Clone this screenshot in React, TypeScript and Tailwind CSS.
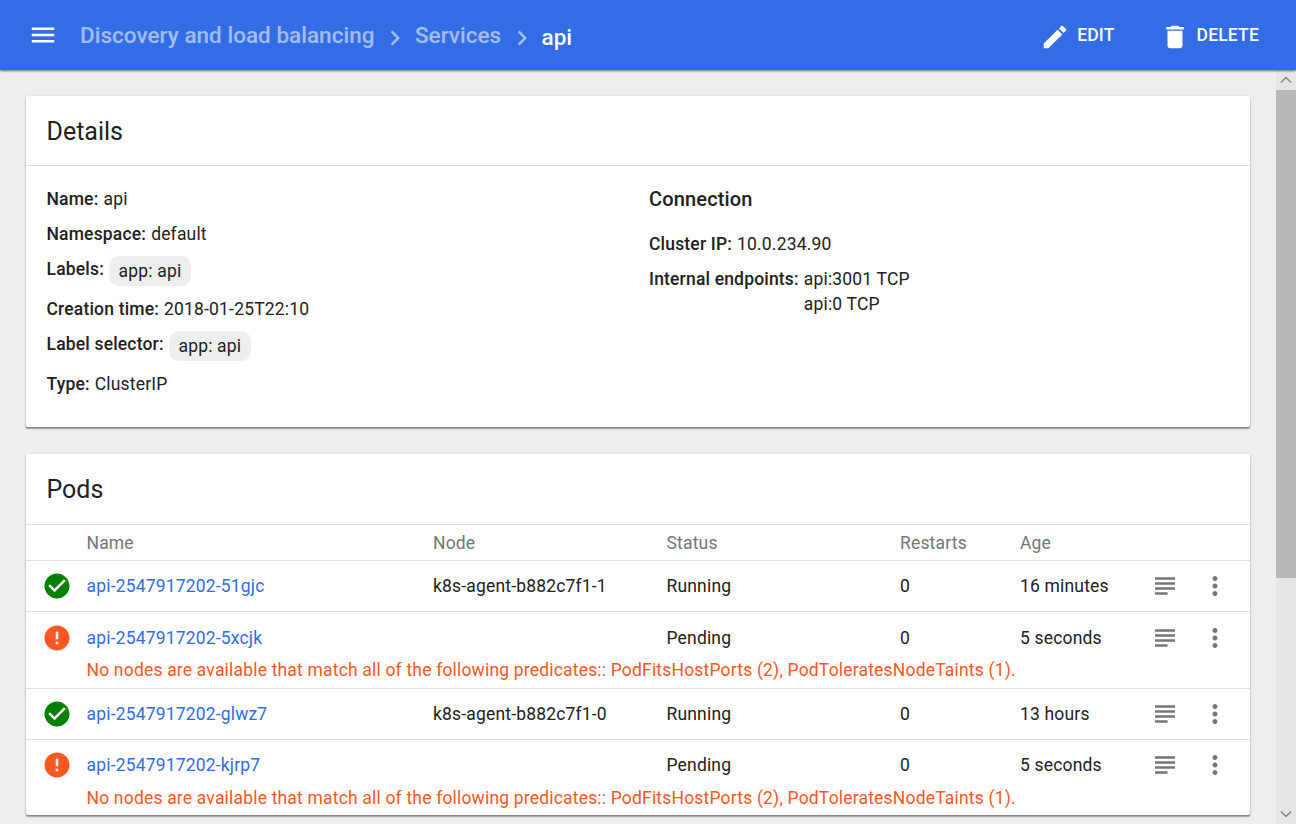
import type { ReactNode } from "react";

function Icon({ d, className = "" }: { d: string; className?: string }) {
  return (
    <svg viewBox="0 0 24 24" className={`size-[30px] shrink-0 fill-current ${className}`}>
      <path d={d} />
    </svg>
  );
}

const icons = {
  menu: "M3 18h18v-2H3v2zm0-5h18v-2H3v2zm0-7v2h18V6H3z",
  chevron: "M10 6L8.59 7.41 13.17 12l-4.58 4.59L10 18l6-6z",
  edit: "M3 17.25V21h3.75L17.81 9.94l-3.75-3.75L3 17.25zM20.71 7.04c.39-.39.39-1.02 0-1.41l-2.34-2.34c-.39-.39-1.02-.39-1.41 0l-1.83 1.83 3.75 3.75 1.83-1.83z",
  trash: "M6 19c0 1.1.9 2 2 2h8c1.1 0 2-.9 2-2V7H6v12zM19 4h-3.5l-1-1h-5l-1 1H5v2h14V4z",
  check: "M12 2C6.48 2 2 6.48 2 12s4.48 10 10 10 10-4.48 10-10S17.52 2 12 2zm-2 15l-5-5 1.41-1.41L10 14.17l7.59-7.59L19 8l-9 9z",
  error: "M12 2C6.48 2 2 6.48 2 12s4.48 10 10 10 10-4.48 10-10S17.52 2 12 2zm1 15h-2v-2h2v2zm0-4h-2V7h2v6z",
  logs: "M14 17H4v2h10v-2zm6-8H4v2h16V9zM4 15h16v-2H4v2zM4 5v2h16V5H4z",
  more: "M12 8c1.1 0 2-.9 2-2s-.9-2-2-2-2 .9-2 2 .9 2 2 2zm0 2c-1.1 0-2 .9-2 2s.9 2 2 2 2-.9 2-2-.9-2-2-2zm0 6c-1.1 0-2 .9-2 2s.9 2 2 2 2-.9 2-2-.9-2-2-2z",
};

const card =
  "ml-[26px] w-[1224px] shrink-0 rounded-[2px] bg-white shadow-[0_1px_3px_rgba(0,0,0,0.22),0_1px_1px_rgba(0,0,0,0.14),0_2px_1px_-0.5px_rgba(0,0,0,0.25)]";

function Field({ label, children, className = "h-[25px] mb-2.5" }: { label: string; children: ReactNode; className?: string }) {
  return (
    <div className={`flex items-start gap-[5px] ${className}`}>
      <span className="font-medium">{label}:</span>
      {children}
    </div>
  );
}

function Chip({ children }: { children: ReactNode }) {
  return <span className="-mt-px h-[30px] rounded-[10px] bg-[#eee] px-[9.7px] leading-[30px]">{children}</span>;
}

const columns = "grid grid-cols-[60.5px_346.5px_233.5px_233.5px_120px_130px_50px_1fr] items-center";
const message =
  "No nodes are available that match all of the following predicates:: PodFitsHostPorts (2), PodToleratesNodeTaints (1).";

const pods = [
  { name: "api-2547917202-51gjc", node: "k8s-agent-b882c7f1-1", age: "16 minutes", ok: true, row: "h-[51px]", line: "h-[50px]" },
  { name: "api-2547917202-5xcjk", node: "", age: "5 seconds", ok: false, row: "h-[77px]", line: "h-[52px]" },
  { name: "api-2547917202-glwz7", node: "k8s-agent-b882c7f1-0", age: "13 hours", ok: true, row: "h-[51px]", line: "h-[50px]" },
  { name: "api-2547917202-kjrp7", node: "", age: "5 seconds", ok: false, row: "h-[76px]", line: "h-[50px] mb-[2px]" },
];

export default function App() {
  return (
    <div className="flex h-[824px] w-[1296px] flex-col overflow-hidden bg-[#eee] font-[Roboto,sans-serif] text-[17.5px] leading-[25px] tracking-[0.175px] text-[#212121]">
      <header className="z-10 flex h-[70px] shrink-0 items-center bg-[#326de6] pl-[27.5px] text-white shadow-[0_1px_2px_rgba(0,0,0,0.55)]">
        <button className="flex"><Icon d={icons.menu} /></button>
        <nav className="ml-[22.5px] flex items-center text-[22.5px] font-medium tracking-normal">
          <a className="w-[299.5px] whitespace-nowrap tracking-[0.02px] text-white/55">Discovery and load balancing</a>
          <Icon d={icons.chevron} className="mt-[5px] text-white/55" />
          <a className="ml-[5.5px] w-[91.5px] text-white/55">Services</a>
          <Icon d={icons.chevron} className="mt-[5px] text-white/55" />
          <span className="ml-[5px] mt-[4px]">api</span>
        </nav>
        <div className="ml-auto flex items-center pr-[37px] font-medium">
          <button className="flex items-center gap-[7px]"><Icon d={icons.edit} className="mt-[4px]" />EDIT</button>
          <button className="ml-[45px] flex items-center gap-[7px]"><Icon d={icons.trash} className="mt-[4px]" />DELETE</button>
        </div>
      </header>

      <div className="flex min-h-0 flex-1">
        <main className="flex w-[1276px] flex-col overflow-hidden pt-[26px]">
          <section className={`${card} h-[331px]`}>
            <h2 className="h-[70px] border-b border-[#e0e0e0] pl-[20.5px] pt-[23px] text-[25px] tracking-normal">Details</h2>
            <div className="flex pl-[20.5px] pt-[21px]">
              <div className="w-[602.5px]">
                <Field label="Name">api</Field>
                <Field label="Namespace">default</Field>
                <Field label="Labels" className="h-[30px] mb-2.5"><Chip>app: api</Chip></Field>
                <Field label="Creation time">2018-01-25T22:10</Field>
                <Field label="Label selector" className="h-[30px] mb-2.5"><Chip>app: api</Chip></Field>
                <Field label="Type">ClusterIP</Field>
              </div>
              <div>
                <h3 className="mb-[20px] text-[20px] font-medium tracking-[0.15px]">Connection</h3>
                <Field label="Cluster IP">10.0.234.90</Field>
                <Field label="Internal endpoints" className="">
                  <span>api:3001 TCP<br />api:0 TCP</span>
                </Field>
              </div>
            </div>
          </section>

          <section className={`${card} mt-[27px] h-[361px]`}>
            <h2 className="h-[70px] pl-[20.5px] pt-[23px] text-[25px] tracking-normal">Pods</h2>
            <div className={`${columns} h-[36px] border-t border-[#e0e0e0] pt-px text-[#757575]`}>
              <span /><span>Name</span><span>Node</span><span>Status</span><span>Restarts</span><span>Age</span>
            </div>
            {pods.map((pod) => (
              <div key={pod.name} className={`${pod.row} border-t border-[#e0e0e0]`}>
                <div className={`${columns} ${pod.line}`}>
                  <Icon d={pod.ok ? icons.check : icons.error} className={`ml-[15.5px] ${pod.ok ? "text-[#008000]" : "text-[#ff5722]"}`} />
                  <a className="text-[#326de6]">{pod.name}</a>
                  <span>{pod.node}</span>
                  <span>{pod.ok ? "Running" : "Pending"}</span>
                  <span>0</span>
                  <span>{pod.age}</span>
                  <Icon d={icons.logs} className="-ml-[0.5px] text-[#757575]" />
                  <Icon d={icons.more} className="-ml-[0.5px] text-[#757575]" />
                </div>
                {!pod.ok && <p className="-mt-[6px] pl-[60.5px] tracking-[0.185px] text-[#ff5722]">{message}</p>}
              </div>
            ))}
          </section>
        </main>
        <div className="flex w-5 flex-col items-center bg-[#e6e6e6] text-[#808080]">
          <svg viewBox="0 0 20 20" className="size-5 fill-none stroke-current stroke-[1.3]"><path d="M5 12.5l5-5 5 5" /></svg>
          <div className="h-[488px] w-full bg-[#b8b8b8]" />
          <svg viewBox="0 0 20 20" className="mt-auto size-5 fill-none stroke-current stroke-[1.3]"><path d="M5 7.5l5 5 5-5" /></svg>
        </div>
      </div>
    </div>
  );
}
